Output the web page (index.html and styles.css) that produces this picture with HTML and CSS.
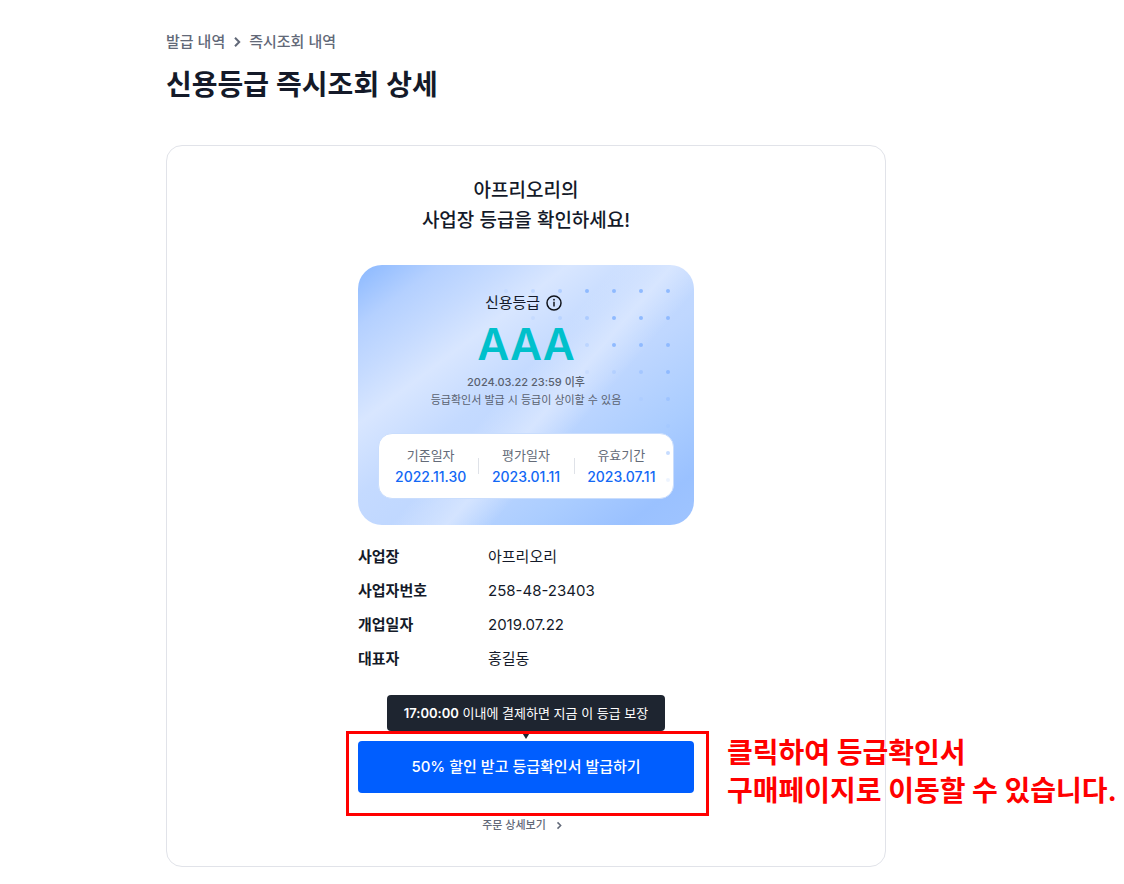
FILE: index.html
```html
<!DOCTYPE html>
<html lang="ko">
<head>
<meta charset="utf-8">
<meta name="viewport" content="width=device-width, initial-scale=1">
<title>신용등급 즉시조회 상세</title>
<link rel="stylesheet" href="styles.css">
</head>
<body>
<main class="page">
  <nav class="breadcrumb" aria-label="현재 위치">
    <a href="#">발급 내역</a>
    <svg class="chevron" viewBox="0 0 8 12" width="8" height="12" aria-hidden="true"><path d="M2 1.8 6.2 6 2 10.2"/></svg>
    <a href="#">즉시조회 내역</a>
  </nav>
  <h1 class="page-title">신용등급 즉시조회 상세</h1>

  <section class="card">
    <h2 class="card-title">아프리오리의<br>사업장 등급을 확인하세요!</h2>

    <div class="content">
      <div class="grade">
        <div class="grade-label">
          <span>신용등급</span>
          <button class="info" type="button" aria-label="신용등급 안내">
            <svg viewBox="0 0 16 16" width="16" height="16" aria-hidden="true"><circle cx="8" cy="8" r="7"/><path d="M8 6.8v4.8"/><circle class="info-dot" cx="8" cy="4.7" r=".9"/></svg>
          </button>
        </div>
        <strong class="grade-value">AAA</strong>
        <p class="grade-note"><b>2024.03.22 23:59 이후</b><br>등급확인서 발급 시 등급이 상이할 수 있음</p>
        <dl class="dates">
          <div class="date"><dt>기준일자</dt><dd>2022.11.30</dd></div>
          <div class="date"><dt>평가일자</dt><dd>2023.01.11</dd></div>
          <div class="date"><dt>유효기간</dt><dd>2023.07.11</dd></div>
        </dl>
        <svg class="dots" viewBox="0 0 168 196" width="168" height="196" aria-hidden="true">
          <g opacity=".15"><circle cx="3" cy="3" r="2"/><circle cx="30" cy="30" r="2"/><circle cx="84" cy="84" r="2"/><circle cx="138" cy="111" r="2"/><circle cx="165" cy="138" r="2"/><circle cx="165" cy="192" r="2"/></g>
          <g opacity=".3"><circle cx="30" cy="3" r="2"/><circle cx="57" cy="30" r="2"/><circle cx="84" cy="57" r="2"/><circle cx="111" cy="84" r="2"/></g>
          <g opacity=".5"><circle cx="57" cy="3" r="2"/><circle cx="84" cy="30" r="2"/><circle cx="138" cy="84" r="2"/><circle cx="165" cy="111" r="2"/><circle cx="165" cy="165" r="2"/></g>
          <g><circle cx="84" cy="3" r="2"/><circle cx="111" cy="3" r="2"/><circle cx="138" cy="3" r="2"/><circle cx="165" cy="3" r="2"/><circle cx="111" cy="30" r="2"/><circle cx="138" cy="30" r="2"/><circle cx="165" cy="30" r="2"/><circle cx="111" cy="57" r="2"/><circle cx="138" cy="57" r="2"/><circle cx="165" cy="57" r="2"/><circle cx="165" cy="84" r="2"/></g>
        </svg>
      </div>

      <dl class="facts">
        <dt>사업장</dt><dd>아프리오리</dd>
        <dt>사업자번호</dt><dd>258-48-23403</dd>
        <dt>개업일자</dt><dd>2019.07.22</dd>
        <dt>대표자</dt><dd>홍길동</dd>
      </dl>

      <div class="tooltip" id="offer"><b>17:00:00</b> 이내에 결제하면 지금 이 등급 보장</div>
      <div class="action">
        <button class="primary" type="button" aria-describedby="offer">50% 할인 받고 등급확인서 발급하기</button>
        <div class="callout">
          <p class="callout-text">클릭하여 등급확인서<br>구매페이지로 이동할 수 있습니다.</p>
        </div>
      </div>
      <a class="order-link" href="#">주문 상세보기
        <svg class="chevron" viewBox="0 0 8 12" width="6" height="9" aria-hidden="true"><path d="M2 1.8 6.2 6 2 10.2"/></svg>
      </a>
    </div>
  </section>
</main>
</body>
</html>
```

FILE: styles.css
```css
* {
  box-sizing: border-box;
}

body {
  margin: 0;
  background: #fff;
  color: #141a29;
  font-family: Inter, "Noto Sans CJK KR", sans-serif;
  font-size: 15px;
  line-height: 24px;
}

h1, h2, p, dl, dd {
  margin: 0;
}

a {
  color: inherit;
  text-decoration: none;
}

button {
  border: 0;
  padding: 0;
  font: inherit;
  cursor: pointer;
}

.page {
  max-width: 886px;
  padding: 30px 0 16px 166px;
}

.breadcrumb {
  display: flex;
  align-items: center;
  gap: 8px;
  color: #626978;
  font-weight: 500;
}

.chevron {
  fill: none;
  stroke: #626978;
  stroke-width: 2;
}

.page-title {
  margin-top: 11px;
  font-size: 28px;
  font-weight: 600;
  line-height: 40px;
}

.card {
  margin-top: 40px;
  padding: 30px 24px 29px;
  border: 1px solid #e1e3e9;
  border-radius: 16px;
}

.card-title {
  font-size: 19px;
  font-weight: 500;
  line-height: 30px;
  text-align: center;
}

.content {
  display: flex;
  flex-direction: column;
  width: 100%;
  max-width: 336px;
  margin: 29px auto 0;
}

.grade {
  position: relative;
  display: flex;
  flex-direction: column;
  align-items: center;
  padding: 26px 20px;
  border-radius: 24px;
  background:
    linear-gradient(131deg, rgba(226, 236, 255, 0) 46%, rgba(226, 236, 255, .65) 56%, rgba(226, 236, 255, 0) 64%),
    linear-gradient(143deg, #8ab8ff 0%, #b4d0ff 12%, #c6dbff 22%, #d8e6ff 31%, #c4daff 45%, #bfd7ff 58%, #abcdff 76%, #9ac1ff 90%, #9fc4ff 100%);
}

.grade-label {
  display: flex;
  align-items: center;
  gap: 6px;
  padding-right: 5px;
}

.info {
  display: flex;
  background: none;
}

.info svg {
  fill: none;
  stroke: #10131a;
  stroke-width: 1.5;
}

.info .info-dot {
  fill: #10131a;
  stroke: none;
}

.grade-value {
  color: #00c0cb;
  font-size: 44px;
  font-weight: 600;
  line-height: 58px;
}

.grade-note {
  color: #59616f;
  font-size: 11px;
  line-height: 18px;
  text-align: center;
}

.grade-note b {
  font-weight: 500;
}

.dates {
  display: grid;
  grid-template-columns: repeat(3, 1fr);
  width: 100%;
  margin-top: 24px;
  padding: 11px 4px;
  border: 1px solid #c9ddfd;
  border-radius: 14px;
  background: #fff;
  text-align: center;
}

.date {
  display: flex;
  flex-direction: column;
  line-height: 21px;
}

.date + .date {
  background: linear-gradient(#dfe2e8, #dfe2e8) left center / 1px 16px no-repeat;
}

.date dt {
  color: #646b78;
  font-size: 13px;
}

.date dd {
  color: #1268f5;
  font-size: 14px;
  font-weight: 500;
}

.dots {
  position: absolute;
  top: 23px;
  right: 23px;
  fill: #8fbaff;
  pointer-events: none;
}

.facts {
  display: grid;
  grid-template-columns: 130px 1fr;
  row-gap: 10px;
  margin-top: 20px;
}

.facts dt {
  font-weight: 600;
}

.tooltip {
  position: relative;
  align-self: center;
  margin-top: 24px;
  padding: 6px 17px;
  border-radius: 4px;
  background: #1e2530;
  color: #fff;
  font-size: 13px;
  white-space: nowrap;
}

.tooltip::after {
  content: "";
  position: absolute;
  top: 100%;
  left: 50%;
  margin-left: -5px;
  border: 5px solid transparent;
  border-top: 8px solid #1e2530;
  border-bottom: 0;
}

.tooltip b {
  font-weight: 600;
}

.action {
  position: relative;
  margin-top: 10px;
}

.primary {
  display: block;
  width: 100%;
  padding: 14px 16px;
  border-radius: 4px;
  background: #005eff;
  color: #fff;
  font-weight: 500;
}

.callout {
  position: absolute;
  inset: -10px -15px -23px -12px;
  border: 3px solid #f00;
  pointer-events: none;
}

.callout-text {
  position: absolute;
  top: 0;
  left: 100%;
  margin-left: 21px;
  color: #f00;
  font-size: 28px;
  font-weight: 700;
  line-height: 38px;
  white-space: nowrap;
}

.order-link {
  display: flex;
  align-items: center;
  align-self: center;
  gap: 10px;
  margin-top: 20px;
  padding-right: 8px;
  color: #626978;
  font-size: 11px;
  font-weight: 500;
}
```
